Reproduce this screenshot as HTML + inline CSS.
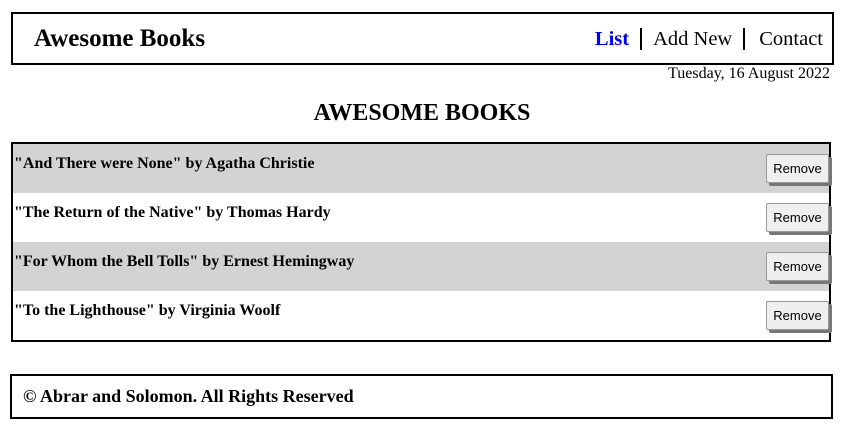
<!DOCTYPE html>
<html><head><style>
*{margin:0;padding:0;box-sizing:border-box}
body{width:844px;height:426px;background:#fff;font-family:"Liberation Serif",serif;color:#000;position:relative;overflow:hidden}
.hdr{position:absolute;left:11px;top:12px;width:823px;height:53px;border:2px solid #000}
.logo{position:absolute;left:21px;top:11px;font-size:25px;font-weight:bold}
.nav{position:absolute;right:9px;top:14px;font-size:20.5px;display:flex;align-items:center}
.nav span{padding:0 11px;line-height:22px}
.nav .sep{border-left:2px solid #000;height:22px;padding:0}
.nav .list{color:#0000ff;font-weight:bold;padding-left:0}
.nav .last{padding-right:0;padding-left:14px}
.date{position:absolute;right:14px;top:65px;font-size:16px}
h1{position:absolute;left:0;width:844px;text-align:center;top:100px;font-size:24px;font-weight:bold}
.box{position:absolute;left:11px;top:142px;width:820px;height:200px;border:2px solid #000}
.row{height:49px;position:relative}
.row.g{background:#d3d3d3}
.row p{position:absolute;left:1px;top:11px;font-size:16px;font-weight:bold}
.row button{position:absolute;right:0;top:10px;width:63px;height:29px;font-family:"Liberation Sans",sans-serif;font-size:13px;background:#efefef;border:1px solid #999;border-radius:2px;box-shadow:3px 3px 0 #777}
.ftr{position:absolute;left:10px;top:374px;width:823px;height:45px;border:2px solid #000}
.ftr p{position:absolute;left:11px;top:10px;font-size:18px;font-weight:bold}
</style></head><body>
<div class="hdr"><div class="logo">Awesome Books</div>
<div class="nav"><span class="list">List</span><span class="sep"></span><span>Add New</span><span class="sep"></span><span class="last">Contact</span></div></div>
<div class="date">Tuesday, 16 August 2022</div>
<h1>AWESOME BOOKS</h1>
<div class="box">
<div class="row g"><p>"And There were None" by Agatha Christie</p><button>Remove</button></div>
<div class="row"><p>"The Return of the Native" by Thomas Hardy</p><button>Remove</button></div>
<div class="row g"><p>"For Whom the Bell Tolls" by Ernest Hemingway</p><button>Remove</button></div>
<div class="row"><p>"To the Lighthouse" by Virginia Woolf</p><button>Remove</button></div>
</div>
<div class="ftr"><p>© Abrar and Solomon. All Rights Reserved</p></div>
</body></html>
